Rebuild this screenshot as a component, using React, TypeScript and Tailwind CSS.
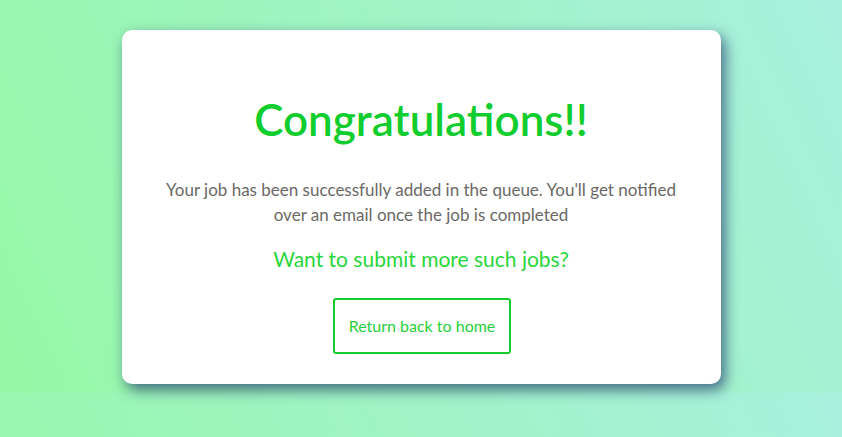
import React from "react";

export default function App() {
  return (
    <div
      className="w-full h-[437px] bg-[linear-gradient(65deg,#96f8a6_0%,#a8f0de_100%)] bg-[length:100%_393px] bg-repeat pt-[30px]"
      style={{ fontFamily: "Lato, 'Noto Sans', sans-serif" }}
    >
      <div className="mx-auto w-[599px] h-[354px] bg-white rounded-[10px] shadow-[4px_6px_14px_rgba(30,50,110,0.7)] flex flex-col items-center pt-[67px]">
        <h1 className="text-[44px] leading-[44px] font-semibold text-[#12cd2e]">
          Congratulations!!
        </h1>
        <p className="mt-[36px] text-[17px] leading-[25px] text-[#6b6966] text-center">
          Your job has been successfully added in the queue. You'll get notified
          <br />
          over an email once the job is completed
        </p>
        <p className="mt-[20px] text-[21px] leading-[24px] text-[#27d63b]">
          Want to submit more such jobs?
        </p>
        <button className="mt-[27px] ml-[2px] w-[178px] h-[56px] border-2 border-[#14cc2e] rounded-[3px] text-[16px] text-[#27cf3a] bg-white">
          Return back to home
        </button>
      </div>
    </div>
  );
}
